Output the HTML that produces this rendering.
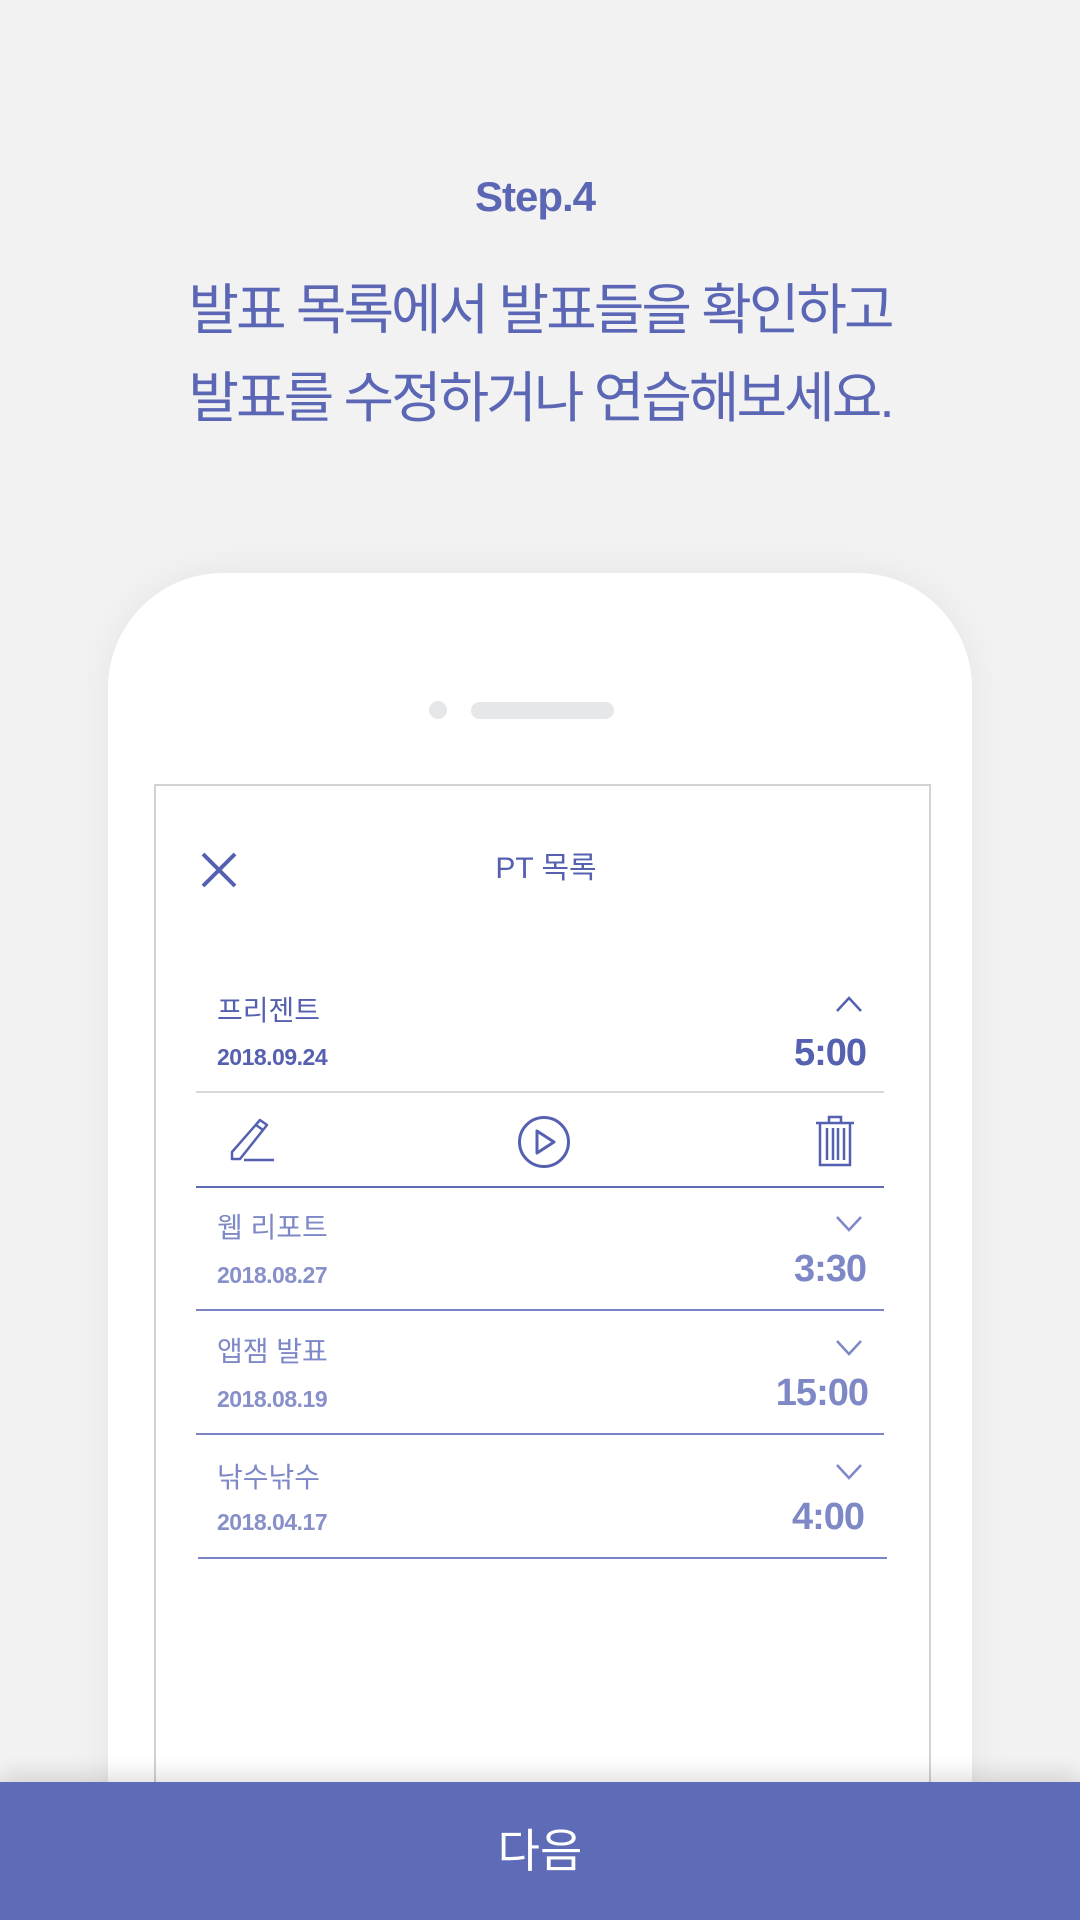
<!DOCTYPE html>
<html><head><meta charset="utf-8"><style>
*{margin:0;padding:0;box-sizing:border-box}
html{width:1080px;height:1920px;overflow:hidden}
body{width:1080px;height:1920px;background:#f2f2f2;position:relative;overflow:hidden;font-family:"Liberation Sans","Noto Sans CJK KR",sans-serif;color:#5b67b5}
.a{position:absolute;white-space:nowrap}
.c{left:0;width:1080px;text-align:center}
.phone{position:absolute;left:108px;top:573px;width:864px;height:1347px;background:#fff;border-radius:115px 115px 0 0;box-shadow:0 0 40px rgba(0,0,0,0.06)}
.screen{position:absolute;left:154px;top:784px;width:777px;height:1136px;border:2px solid #d2d2d2;border-bottom:none;background:#fff}
.t1{font-size:28px;line-height:40px;color:#5560b0}
.t2{font-size:28px;line-height:40px;color:#7e88c6}
.d1{font-size:23px;font-weight:bold;line-height:30px;color:#5560b0;letter-spacing:-0.5px}
.d2{font-size:23px;font-weight:bold;line-height:30px;color:#8890c9;letter-spacing:-0.5px}
.tm{font-size:38px;font-weight:bold;line-height:46px;letter-spacing:-1px;text-align:right}
.line{position:absolute;height:2px;background:#7b84c6}
</style></head><body>
<div class="a c" style="top:173px;left:-5px;font-size:42px;font-weight:bold;line-height:48px;letter-spacing:-1px">Step.4</div>
<div class="a c" style="top:278px;font-size:55px;line-height:64px;letter-spacing:-3px">발표 목록에서 발표들을 확인하고</div>
<div class="a c" style="top:366px;font-size:55px;line-height:64px;letter-spacing:-3px">발표를 수정하거나 연습해보세요.</div>
<div class="phone"></div>
<div class="a" style="left:429px;top:701px;width:18px;height:18px;border-radius:9px;background:#e6e7e9"></div>
<div class="a" style="left:471px;top:702px;width:143px;height:17px;border-radius:9px;background:#e6e7e9"></div>
<div class="screen"></div>
<svg class="a" style="left:200px;top:851px" width="38" height="38" viewBox="0 0 38 38"><path d="M3 3L35 35M35 3L3 35" stroke="#5560b0" stroke-width="4"/></svg>
<div class="a c" style="top:849px;left:6px;font-size:30px;line-height:40px;color:#5560b0">PT 목록</div>

<div class="a t1" style="left:217px;top:991px">프리젠트</div>
<div class="a d1" style="left:217px;top:1042px">2018.09.24</div>
<svg class="a" style="left:835px;top:995px" width="28" height="18"><path d="M2 16L14 3L26 16" stroke="#5560b0" stroke-width="2.5" fill="none"/></svg>
<div class="a tm" style="right:214px;top:1030px;color:#5560b0">5:00</div>
<div class="line" style="left:196px;width:688px;top:1091px;background:#d8d8d8"></div>
<svg class="a" style="left:226px;top:1115px" width="50" height="50" viewBox="0 0 50 50"><path d="M34 5L41 10L14 44L6 44L6 37Z M30 10L37 15" stroke="#5560b0" stroke-width="2.5" fill="none" stroke-linejoin="round"/><path d="M18 45H48" stroke="#5560b0" stroke-width="2.5"/></svg>
<svg class="a" style="left:516px;top:1114px" width="56" height="56" viewBox="0 0 56 56"><circle cx="28" cy="28" r="24.5" stroke="#5560b0" stroke-width="3" fill="none"/><path d="M21 17L38 28L21 39Z" stroke="#5560b0" stroke-width="3" fill="none" stroke-linejoin="round"/></svg>
<svg class="a" style="left:814px;top:1114px" width="42" height="54" viewBox="0 0 42 54"><path d="M2 9H40M15 9V3H27V9M6 9V51H36V9M13 14V46M19 14V46M24 14V46M30 14V46" stroke="#5560b0" stroke-width="2.5" fill="none"/></svg>
<div class="line" style="left:196px;width:688px;top:1186px;background:#5e6bb7"></div>

<div class="a t2" style="left:217px;top:1208px">웹 리포트</div>
<div class="a d2" style="left:217px;top:1260px">2018.08.27</div>
<svg class="a" style="left:835px;top:1215px" width="28" height="18"><path d="M2 2L14 15L26 2" stroke="#7e88c6" stroke-width="2.5" fill="none"/></svg>
<div class="a tm" style="right:214px;top:1246px;color:#7e88c6">3:30</div>
<div class="line" style="left:196px;width:688px;top:1309px"></div>

<div class="a t2" style="left:217px;top:1332px">앱잼 발표</div>
<div class="a d2" style="left:217px;top:1384px">2018.08.19</div>
<svg class="a" style="left:835px;top:1339px" width="28" height="18"><path d="M2 2L14 15L26 2" stroke="#7e88c6" stroke-width="2.5" fill="none"/></svg>
<div class="a tm" style="right:212px;top:1370px;color:#7e88c6">15:00</div>
<div class="line" style="left:196px;width:688px;top:1433px"></div>

<div class="a t2" style="left:217px;top:1458px">낚수낚수</div>
<div class="a d2" style="left:217px;top:1507px">2018.04.17</div>
<svg class="a" style="left:835px;top:1463px" width="28" height="18"><path d="M2 2L14 15L26 2" stroke="#7e88c6" stroke-width="2.5" fill="none"/></svg>
<div class="a tm" style="right:216px;top:1494px;color:#7e88c6">4:00</div>
<div class="line" style="left:198px;width:689px;top:1557px"></div>

<div class="a" style="left:0;top:1782px;width:1080px;height:138px;background:#5e6bb7;box-shadow:0 -8px 20px rgba(0,0,0,0.12)"></div>
<div class="a c" style="top:1823px;font-size:46px;line-height:56px;color:#fff">다음</div>
</body></html>
